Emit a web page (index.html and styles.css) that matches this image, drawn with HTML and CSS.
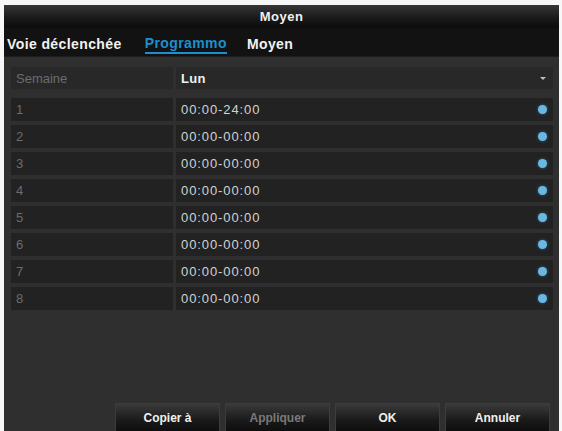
FILE: index.html
```html
<!DOCTYPE html>
<html lang="fr">
<head>
    <meta charset="UTF-8">
    <title>Moyen</title>
    <link rel="stylesheet" href="styles.css">
</head>
<body>
    <div class="window">
        <div class="titlebar">Moyen</div>

        <div class="tabs">
            <span class="tab">Voie déclenchée</span>
            <span class="tab active">Programmo</span>
            <span class="tab">Moyen</span>
        </div>

        <div class="content">
            <!-- Day selector -->
            <div class="row head">
                <div class="cell label">Semaine</div>
                <div class="cell value">
                    <span class="day">Lun</span>
                    <span class="arrow"></span>
                </div>
            </div>

            <!-- Time slots -->
            <div class="slots">
                <div class="row"><div class="cell label">1</div><div class="cell value">00:00-24:00<span class="dot"></span></div></div>
                <div class="row"><div class="cell label">2</div><div class="cell value">00:00-00:00<span class="dot"></span></div></div>
                <div class="row"><div class="cell label">3</div><div class="cell value">00:00-00:00<span class="dot"></span></div></div>
                <div class="row"><div class="cell label">4</div><div class="cell value">00:00-00:00<span class="dot"></span></div></div>
                <div class="row"><div class="cell label">5</div><div class="cell value">00:00-00:00<span class="dot"></span></div></div>
                <div class="row"><div class="cell label">6</div><div class="cell value">00:00-00:00<span class="dot"></span></div></div>
                <div class="row"><div class="cell label">7</div><div class="cell value">00:00-00:00<span class="dot"></span></div></div>
                <div class="row"><div class="cell label">8</div><div class="cell value">00:00-00:00<span class="dot"></span></div></div>
            </div>
        </div>

        <div class="footer">
            <button>Copier à</button>
            <button disabled>Appliquer</button>
            <button>OK</button>
            <button>Annuler</button>
        </div>
    </div>
</body>
</html>
```

FILE: styles.css
```css
body {
    margin: 0;
    background: #f7f7f7;
    font-family: "Liberation Sans", Arial, sans-serif;
}
.window {
    margin: 5px 0 0 4px;
    width: 555px;
    height: 426px;
    background: #2f2f2f;
    display: flex;
    flex-direction: column;
}
.titlebar {
    height: 23px;
    line-height: 23px;
    text-align: center;
    color: #f0f0f0;
    font-size: 13px;
    font-weight: bold;
    letter-spacing: 0.5px;
    background: linear-gradient(#363636, #1a1a1a 55%, #0b0b0b);
}
.tabs {
    height: 28px;
    display: flex;
    align-items: center;
    background: #121212;
    border-bottom: 1px solid #1c1c1c;
    padding-left: 3px;
}
.tab {
    color: #f2f2f2;
    font-size: 14px;
    font-weight: bold;
    letter-spacing: 0.4px;
    margin-right: 23px;
    padding-top: 3px;
}
.tab.active {
    color: #1b8fd0;
    border-bottom: 2px solid #1b8fd0;
    padding-bottom: 1px;
    margin-top: 2px;
    margin-right: 20px;
}
.content {
    flex: 1;
    padding: 10px 6px 0 7px;
}
.row {
    display: grid;
    grid-template-columns: 162px 1fr;
    column-gap: 3px;
    height: 23px;
    margin-bottom: 4px;
}
.row.head {
    height: 22px;
    margin-bottom: 9px;
}
.cell {
    display: flex;
    align-items: center;
    font-size: 13px;
    background: #222222;
}
.head .cell {
    background: #282828;
}
.label {
    color: #6c6c6c;
    padding-left: 5px;
}
.value {
    color: #d2d2d2;
    letter-spacing: 0.9px;
    padding-left: 5px;
    padding-right: 6px;
    justify-content: space-between;
}
.day {
    color: #f0f0f0;
    font-weight: bold;
    letter-spacing: 0.3px;
}
.arrow {
    width: 0;
    height: 0;
    border-left: 3px solid transparent;
    border-right: 3px solid transparent;
    border-top: 3px solid #bdbdbd;
    margin-right: 1px;
}
.dot {
    width: 9px;
    height: 9px;
    border-radius: 50%;
    background: #6cb7df;
    box-shadow: 0 0 3px #2a6f99;
}
.footer {
    display: flex;
    justify-content: flex-end;
    gap: 5px;
    padding-right: 9px;
}
button {
    width: 105px;
    height: 28px;
    border: 1px solid #3c3c3c;
    border-bottom: none;
    background: linear-gradient(#3a3a3a, #1a1a1a 60%, #0e0e0e);
    color: #f0f0f0;
    font-family: "Liberation Sans", Arial, sans-serif;
    font-size: 12px;
    font-weight: bold;
    padding: 0;
}
button:disabled {
    color: #7a7a7a;
}
```
